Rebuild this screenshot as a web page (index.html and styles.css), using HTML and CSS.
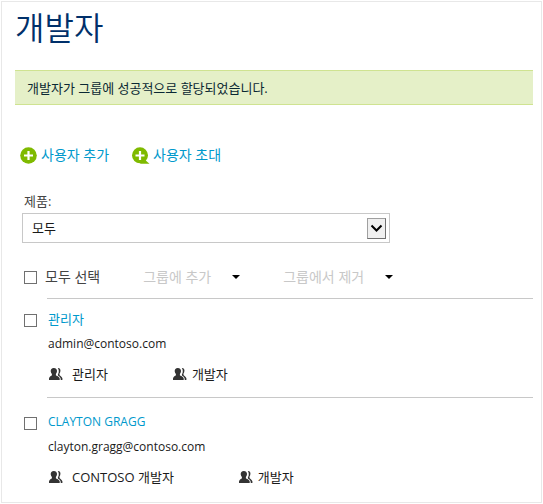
FILE: index.html
```html
<!DOCTYPE html>
<html lang="ko">
<head>
<meta charset="utf-8">
<title>개발자</title>
<link rel="stylesheet" href="styles.css">
</head>
<body>
<svg class="sprite" aria-hidden="true">
  <symbol id="people" viewBox="0 0 14 12">
    <path d="M8.800 0c1.900-.1 2.800 1.200 2.600 3.100-.1 1-.4 1.900-.9 2.500v1.300c.2.700 2.500 1.700 2.900 3.400V12h-1.600c0-2.600-1.400-3.600-2.900-4.400V6.300C10 4.800 10.100 1.500 8.800 0z"/>
    <path d="M4.800 0c2.200 0 3.300 1.300 3.200 3.300-.1 1.200-.5 2.100-1.100 2.800v1.200c.3.800 3.600 1 3.800 3.200V12H0V10.500c.2-2.200 2.600-2.400 2.900-3.200V6.100C2.200 5.400 1.800 4.500 1.700 3.300 1.600 1.300 2.700 0 4.800 0z"/>
  </symbol>
</svg>
<main class="panel">
  <h1 class="title">개발자</h1>
  <p class="alert" role="status">개발자가 그룹에 성공적으로 할당되었습니다.</p>

  <nav class="actions">
    <a class="action" href="#add">
      <svg class="action-icon" viewBox="0 0 17 17" aria-hidden="true"><circle cx="8.500" cy="8.500" r="8.300" fill="#7fba00"/><path d="M8.500 4v9M4 8.500h9" stroke="#fff" stroke-width="2.200"/></svg>
      사용자 추가
    </a>
    <a class="action" href="#invite">
      <svg class="action-icon" viewBox="0 0 17 17" aria-hidden="true"><circle cx="8" cy="8.300" r="8" fill="#7fba00"/><path d="M8 16.800h9.500L14.300 14 12 12z" fill="#7fba00"/><path d="M8 4v9M3.500 8.500h9" stroke="#fff" stroke-width="2.200"/></svg>
      사용자 초대
    </a>
  </nav>

  <div class="filter">
    <label class="filter-label" for="product">제품:</label>
    <div class="select-box">
      <select class="select" id="product"><option>모두</option></select>
      <span class="select-arrow" aria-hidden="true"><svg viewBox="0 0 17 19"><path d="M3.500 6.500l5 5 5-5" fill="none" stroke="#000" stroke-width="2"/></svg></span>
    </div>
  </div>

  <div class="toolbar">
    <input class="check" type="checkbox" id="all">
    <label class="all-label" for="all">모두 선택</label>
    <button class="menu" type="button" disabled>그룹에 추가<span class="caret"></span></button>
    <button class="menu" type="button" disabled>그룹에서 제거<span class="caret"></span></button>
  </div>

  <ul class="users">
    <li class="user">
      <input class="check" type="checkbox" aria-label="관리자">
      <div class="details">
        <a class="name" href="#admin">관리자</a>
        <div class="email">admin@contoso.com</div>
        <ul class="groups">
          <li class="group"><svg class="people"><use href="#people"/></svg>관리자</li>
          <li class="group"><svg class="people"><use href="#people"/></svg>개발자</li>
        </ul>
      </div>
    </li>
    <li class="user">
      <input class="check" type="checkbox" aria-label="CLAYTON GRAGG">
      <div class="details">
        <a class="name latin" href="#clayton">CLAYTON GRAGG</a>
        <div class="email">clayton.gragg@contoso.com</div>
        <ul class="groups">
          <li class="group"><svg class="people"><use href="#people"/></svg>CONTOSO 개발자</li>
          <li class="group"><svg class="people"><use href="#people"/></svg>개발자</li>
        </ul>
      </div>
    </li>
  </ul>
</main>
</body>
</html>
```
FILE: styles.css
```css
* {
  box-sizing: border-box;
}

body {
  margin: 0;
  padding: 1px;
  background: #fff;
  color: #1a1a1a;
  font-family: "Open Sans", "Noto Sans CJK KR", sans-serif;
  font-size: 13px;
  line-height: 20px;
}

ul {
  margin: 0;
  padding: 0;
  list-style: none;
}

a {
  color: #0099cc;
  text-decoration: none;
}

.sprite {
  display: none;
}

.panel {
  padding: 4px 8px 2px 13px;
  border: 1px solid #e8e8e8;
}

.title {
  margin: 0;
  color: #00306a;
  font-size: 32px;
  font-weight: 350;
  line-height: 44px;
}

.alert {
  margin: 20px 0 40px;
  padding: 7px 12px 6px;
  border: solid #cfe391;
  border-width: 1px 0;
  background: #e5f0c8;
  color: #0a2833;
}

.actions {
  display: flex;
  gap: 23px;
  padding-left: 5px;
}

.action {
  display: flex;
  align-items: center;
  gap: 4px;
  font-size: 14px;
}

.action-icon {
  width: 17px;
  height: 17px;
  overflow: visible;
}

.filter {
  width: 375px;
  margin-top: 26px;
  padding-left: 7px;
}

.filter-label {
  display: block;
  padding-left: 2px;
  color: #444;
}

.select-box {
  position: relative;
  margin-top: 2px;
}

.select {
  display: block;
  width: 100%;
  height: 30px;
  padding: 0 32px 0 9px;
  appearance: none;
  border: 1px solid #c8c8c8;
  border-radius: 0;
  background: #fff;
  color: #1a1a1a;
  font: inherit;
}

.select-arrow {
  position: absolute;
  top: 5px;
  right: 4px;
  width: 19px;
  height: 21px;
  border: 1px solid #707070;
  border-top-color: #a0a0a0;
  border-left-color: #a0a0a0;
  background: #f0f0f0;
  pointer-events: none;
}

.select-arrow svg {
  display: block;
}

.check {
  flex: none;
  width: 13px;
  height: 13px;
  margin: 0;
  appearance: none;
  border: 1px solid #707070;
  background: #fff;
}

.check:checked {
  background: #707070;
}

.toolbar {
  display: flex;
  align-items: center;
  margin-top: 24px;
  padding-left: 9px;
}

.all-label {
  margin-left: 8px;
  color: #444;
  font-size: 14px;
}

.menu {
  display: flex;
  align-items: center;
  gap: 21px;
  margin-left: 43px;
  padding: 0;
  border: 0;
  background: none;
  color: #c8c8c8;
  font: inherit;
  font-size: 14px;
  line-height: 20px;
}

.caret {
  border: 4px solid transparent;
  border-top-color: #000;
  border-bottom: 0;
}

.users {
  margin-top: 11px;
}

.user {
  display: flex;
  align-items: flex-start;
  gap: 10px;
  padding-left: 9px;
}

.user .check {
  margin-top: 16px;
}

.details {
  flex: 1;
  padding: 10px 1px 13px;
  border-top: 1px solid #c8c8c8;
}

.user + .user .details {
  padding-top: 14px;
}

.user + .user .check {
  margin-top: 20px;
}

.name,
.email {
  display: block;
}

.latin,
.email {
  font-size: 12px;
  font-weight: 500;
}

.email {
  margin-top: 5px;
}

.groups {
  display: flex;
  gap: 65px;
  margin-top: 10px;
  padding-left: 1px;
}

.group {
  display: flex;
  align-items: center;
  gap: 5px;
}

.group:first-child {
  gap: 9px;
}

.people {
  width: 14px;
  height: 12px;
  fill: #333;
}
```
